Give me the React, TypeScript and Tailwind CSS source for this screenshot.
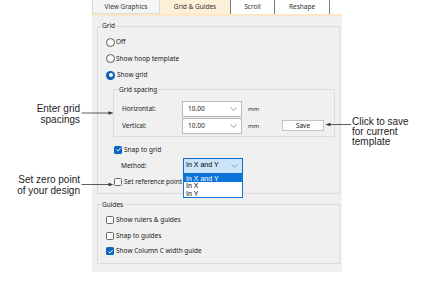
const ui = { fontFamily: '"Noto Sans", "Open Sans", sans-serif' };
const note = { fontFamily: '"Liberation Sans", Arial, sans-serif' };

function Radio({ checked }: { checked?: boolean }) {
  if (checked) {
    return (
      <span className="flex h-[9px] w-[9px] shrink-0 items-center justify-center rounded-full bg-[#0a5fb4]">
        <span className="h-[4px] w-[4px] rounded-full bg-white" />
      </span>
    );
  }
  return <span className="h-[9px] w-[9px] shrink-0 rounded-full border border-[#5c5c5c] bg-[#f9f9f9]" />;
}

function Check({ checked }: { checked?: boolean }) {
  if (checked) {
    return (
      <span className="flex h-[8px] w-[8px] shrink-0 items-center justify-center rounded-[1.5px] bg-[#0a64c2]">
        <svg width="7" height="7" viewBox="0 0 8 8">
          <path d="M1.6 4.2 L3.3 5.8 L6.6 2.2" fill="none" stroke="white" strokeWidth="1.1" />
        </svg>
      </span>
    );
  }
  return <span className="h-[8px] w-[8px] shrink-0 rounded-[1.5px] border border-[#6a6a6a] bg-[#f8f8f8]" />;
}

function Chevron({ color = "#8a8a8a" }: { color?: string }) {
  return (
    <svg width="7" height="4" viewBox="0 0 7 4">
      <polyline points="0.5,0.5 3.5,3.3 6.5,0.5" fill="none" stroke={color} strokeWidth="0.9" />
    </svg>
  );
}

function NumberBox() {
  return (
    <div className="flex h-[16px] w-[60px] items-center justify-between border border-[#b9b9b9] bg-white pl-[5px] pr-[4px] text-[6.6px] text-[#1c1c1c]">
      <span>10.00</span>
      <Chevron />
    </div>
  );
}

function Row({ children, className = "" }: { children: React.ReactNode; className?: string }) {
  return <div className={"flex items-center " + className}>{children}</div>;
}

export default function App() {
  return (
    <div className="relative h-[285px] w-[430px] overflow-hidden bg-white text-[#202020]" style={ui}>
      <div className="ml-[92px] w-[250px]">
        {/* tabs */}
        <div className="flex h-[14px] items-stretch text-[6.5px] text-[#333]">
          <div className="flex w-[68px] items-center justify-center border border-t-0 border-[#dcdcdc] bg-[#f5f5f5]">
            View Graphics
          </div>
          <div className="flex w-[70px] items-center justify-center bg-[#fdf0d9]">Grid &amp; Guides</div>
          <div className="flex w-[44px] items-center justify-center border-l border-[#7d7d7d] bg-white">Scroll</div>
          <div className="flex w-[56px] items-center justify-center border-x border-[#7d7d7d] bg-white">Reshape</div>
          <div className="flex-1 bg-white" />
        </div>
        <div className="h-[2px] bg-[#fce8c7]" />

        {/* body */}
        <div className="h-[256px] bg-[#f0f0f0] pt-[6px]">
          <fieldset className="ml-[5px] mr-[2px] border border-[#dcdcdc] px-0 pb-[3px]">
            <legend className="ml-[3px] px-[1px] text-[6.5px] leading-[8px]">Grid</legend>
            <div className="pl-[8px] text-[6.5px]">
              <Row className="mt-[4px] h-[16.5px] gap-[1px]">
                <Radio />
                <span>Off</span>
              </Row>
              <Row className="h-[16.5px] gap-[1px]">
                <Radio />
                <span>Show hoop template</span>
              </Row>
              <Row className="h-[16.5px] gap-[2px]">
                <Radio checked />
                <span>Show grid</span>
              </Row>

              <fieldset className="ml-[7px] mt-[2px] w-[222px] border border-[#dcdcdc] px-0 pb-[2px]">
                <legend className="ml-[4px] px-[1px] leading-[8px]">Grid spacing</legend>
                <div className="pl-[8px]">
                  <Row className="mt-[7px] h-[16px]">
                    <span className="w-[60px]">Horizontal:</span>
                    <NumberBox />
                    <span className="ml-[6px] mt-[2px] text-[6px]">mm</span>
                  </Row>
                  <Row className="mt-[1px] h-[16px]">
                    <span className="w-[60px]">Vertical:</span>
                    <NumberBox />
                    <span className="ml-[6px] mt-[2px] w-[34px] text-[6px]">mm</span>
                    <div className="flex h-[11px] w-[42px] items-center justify-center border border-[#c4c4c4] bg-[#fdfdfd] text-[6.5px]">
                      Save
                    </div>
                  </Row>
                </div>
              </fieldset>

              <Row className="ml-[8px] mt-[5px] h-[16px] gap-[2px]">
                <Check checked />
                <span>Snap to grid</span>
              </Row>
              <Row className="ml-[15px] h-[16px]">
                <span className="w-[62px]">Method:</span>
                <div className="relative">
                  <div
                    className="flex h-[16px] w-[60px] items-center justify-between border border-[#0a6bd0] bg-[#cce4f7] pl-[2px] pr-[4px] text-[7px] text-black"
                    style={note}
                  >
                    <span>In X and Y</span>
                    <Chevron color="#7f95a8" />
                  </div>
                  <div
                    className="absolute left-0 top-full z-10 w-[60px] border border-[#1473d6] bg-white text-[7px] leading-[7.6px] text-black"
                    style={note}
                  >
                    <div className="bg-[#0a74da] pl-[2px] text-white">In X and Y</div>
                    <div className="pl-[2px]">In X</div>
                    <div className="pl-[2px]">In Y</div>
                  </div>
                </div>
              </Row>
              <Row className="ml-[8px] h-[16px] gap-[2px]">
                <Check />
                <span>Set reference point</span>
              </Row>
            </div>
          </fieldset>

          <fieldset className="ml-[5px] mr-[2px] mt-[7px] border border-[#dcdcdc] px-0 pb-[3.5px]">
            <legend className="ml-[3px] px-[1px] text-[6.5px] leading-[8px]">Guides</legend>
            <div className="pl-[8px] text-[6.5px]">
              <Row className="mt-[4px] h-[15.5px] gap-[2px]">
                <Check />
                <span>Show rulers &amp; guides</span>
              </Row>
              <Row className="h-[15.5px] gap-[2px]">
                <Check />
                <span>Snap to guides</span>
              </Row>
              <Row className="h-[15.5px] gap-[2px]">
                <Check checked />
                <span>Show Column C width guide</span>
              </Row>
            </div>
          </fieldset>
        </div>
      </div>

      {/* callouts */}
      <div className="absolute right-[350px] top-[103px] text-right text-[10px] leading-[11px] text-[#222]" style={note}>
        Enter grid
        <br />
        spacings
      </div>
      <div className="absolute right-[350px] top-[175px] text-right text-[10px] leading-[10.5px] text-[#222]" style={note}>
        Set zero point
        <br />
        of your design
      </div>
      <div className="absolute left-[352px] top-[117px] text-[10px] leading-[10px] text-[#222]" style={note}>
        Click to save
        <br />
        for current
        <br />
        template
      </div>
      <svg className="pointer-events-none absolute left-0 top-0" width="430" height="285" viewBox="0 0 430 285">
        <g stroke="#333" strokeWidth="0.8" fill="#333">
          <line x1="81.5" y1="113" x2="110" y2="113" />
          <polygon points="113.5,113 108.5,111.2 108.5,114.8" stroke="none" />
          <line x1="81.5" y1="184.5" x2="110" y2="184.5" />
          <polygon points="113.5,184.5 108.5,182.7 108.5,186.3" stroke="none" />
          <line x1="329" y1="124.5" x2="351" y2="124.5" />
          <polygon points="325.5,124.5 330.5,122.7 330.5,126.3" stroke="none" />
        </g>
      </svg>
    </div>
  );
}
